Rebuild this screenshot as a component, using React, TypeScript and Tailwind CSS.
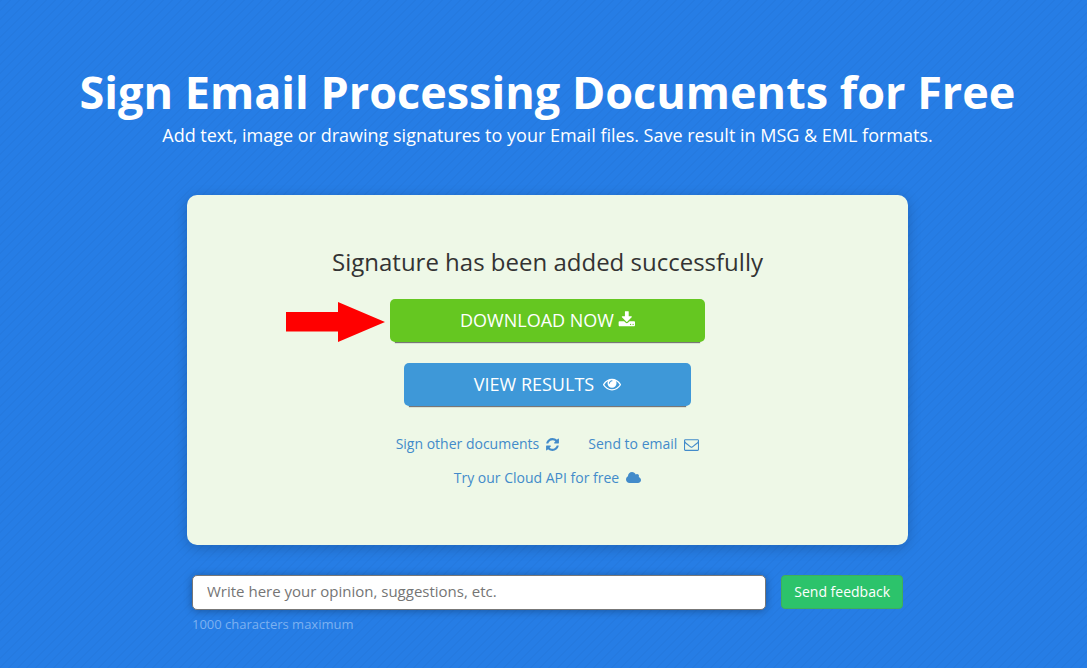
import React from "react";

type IconProps = { className: string; viewBox: string; d: string };

function Icon({ className, viewBox, d }: IconProps) {
  return (
    <svg className={className} viewBox={viewBox} fill="currentColor" aria-hidden="true">
      <path d={d} />
    </svg>
  );
}

const DOWNLOAD =
  "M1344 1344q0-26-19-45t-45-19-45 19-19 45 19 45 45 19 45-19 19-45zm256 0q0-26-19-45t-45-19-45 19-19 45 19 45 45 19 45-19 19-45zm128-224v320q0 40-28 68t-68 28h-1472q-40 0-68-28t-28-68v-320q0-40 28-68t68-28h465l135 136q58 56 136 56t136-56l136-136h464q40 0 68 28t28 68zm-325-569q17 41-14 70l-448 448q-18 19-45 19t-45-19l-448-448q-31-29-14-70 17-39 59-39h256v-448q0-26 19-45t45-19h256q26 0 45 19t19 45v448h256q42 0 59 39z";
const EYE =
  "M1664 960q-152-236-381-353 61 104 61 225 0 185-131.5 316.5t-316.5 131.5-316.5-131.5-131.5-316.5q0-121 61-225-229 117-381 353 133 205 333.5 326.5t434.5 121.5 434.5-121.5 333.5-326.5zm-720-384q0-20-14-34t-34-14q-125 0-214.5 89.5t-89.5 214.5q0 20 14 34t34 14 34-14 14-34q0-86 61-147t147-61q20 0 34-14t14-34zm848 384q0 34-20 69-140 230-376.5 368.5t-499.5 138.5-499.5-139-376.5-368q-20-35-20-69t20-69q140-229 376.5-368t499.5-139 499.5 139 376.5 368q20 35 20 69z";
const REFRESH =
  "M1639 1056q0 5-1 7-64 268-268 434.5t-478 166.5q-146 0-282.5-55t-243.5-157l-129 129q-19 19-45 19t-45-19-19-45v-448q0-26 19-45t45-19h448q26 0 45 19t19 45-19 45l-137 137q71 66 161 102t187 36q134 0 250-65t186-179q11-17 53-117 8-23 30-23h192q13 0 22.5 9.5t9.5 22.5zm25-800v448q0 26-19 45t-45 19h-448q-26 0-45-19t-19-45 19-45l138-138q-148-137-349-137-134 0-250 65t-186 179q-11 17-53 117-8 23-30 23h-199q-13 0-22.5-9.5t-9.5-22.5v-7q65-268 270-434.5t480-166.5q146 0 284 55.5t245 156.5l130-129q19-19 45-19t45 19 19 45z";
const ENVELOPE =
  "M1664 1504v-768q-32 36-69 66-268 206-426 338-51 43-83 67t-86.5 48.5-102.5 24.5h-2q-48 0-102.5-24.5t-86.5-48.5-83-67q-158-132-426-338-37-30-69-66v768q0 13 9.5 22.5t22.5 9.5h1472q13 0 22.5-9.5t9.5-22.5zm0-1051v-24.5l-.5-13-3-12.5-5.5-9-9-7.5-14-2.5h-1472q-13 0-22.5 9.5t-9.5 22.5q0 168 147 284 193 152 401 317 6 5 35 29.5t46 37.5 44.5 31.5 50.5 27.5 43 9h2q20 0 43-9t50.5-27.5 44.5-31.5 46-37.5 35-29.5q208-165 401-317 54-43 100.5-115.5t46.5-131.5zm128-37v1088q0 66-47 113t-113 47h-1472q-66 0-113-47t-47-113v-1088q0-66 47-113t113-47h1472q66 0 113 47t47 113z";
const CLOUD =
  "M1984 1152q0 159-112.5 271.5t-271.5 112.5h-1088q-185 0-316.5-131.5t-131.5-316.5q0-132 71-241.5t187-163.5q-2-28-2-43 0-212 150-362t362-150q158 0 286.5 88t187.5 230q70-62 166-62 106 0 181 75t75 181q0 75-41 138 129 30 213 134.5t84 239.5z";

export default function App() {
  return (
    <main className="min-h-screen bg-[#267de5] bg-[linear-gradient(135deg,rgba(0,0,0,0.025)_15%,transparent_15%,transparent_50%,rgba(0,0,0,0.025)_50%,rgba(0,0,0,0.025)_65%,transparent_65%)] bg-[length:9px_9px] pt-16 pb-8 pl-2 font-['Open_Sans','Noto_Sans',sans-serif] text-white">
      <header className="text-center">
        <h1 className="text-[45px] leading-[56px] font-bold">Sign Email Processing Documents for Free</h1>
        <p className="text-lg leading-[30px]">
          Add text, image or drawing signatures to your Email files. Save result in MSG &amp; EML formats.
        </p>
      </header>

      <div className="mx-auto mt-[45px] max-w-[721px]">
        <section className="flex flex-col items-center rounded-[10px] bg-[#eef8e7] px-6 pt-12 pb-[50px] shadow-[0_3px_14px_rgba(0,0,0,0.2)]">
          <h2 className="text-2xl leading-[38px] text-[#333333]">Signature has been added successfully</h2>
          <div className="relative mt-[18px]">
            <svg
              className="absolute top-[3px] right-full mr-[5px] h-10 w-[99px]"
              viewBox="0 0 99 40"
              fill="#ff0000"
              aria-hidden="true"
            >
              <path d="M0 10H52V0L99 20L52 40V29.5H0Z" />
            </svg>
            <button
              type="button"
              className="flex h-[43px] items-center rounded-[5px] bg-[#65c721] px-[70px] pb-0.5 text-lg shadow-[0_6px_1px_-5px_#777777]"
            >
              DOWNLOAD NOW
              <Icon className="ml-1 h-[18px] w-[17px]" viewBox="0 0 1728 1792" d={DOWNLOAD} />
            </button>
          </div>
          <button
            type="button"
            className="mt-[21px] flex h-[43px] items-center rounded-[5px] bg-[#3e98d8] px-[70px] pb-0.5 text-lg shadow-[0_6px_1px_-5px_#777777]"
          >
            VIEW RESULTS
            <Icon className="ml-[9px] size-[18px]" viewBox="0 0 1792 1792" d={EYE} />
          </button>
          <nav className="mt-[21px] flex flex-wrap justify-center gap-x-7 text-sm leading-[34px] text-[#428bca]">
            <a href="#sign" className="flex items-center">
              Sign other documents
              <Icon className="ml-1.5 size-[15px]" viewBox="0 0 1792 1792" d={REFRESH} />
            </a>
            <a href="#email" className="flex items-center">
              Send to email
              <Icon className="ml-[7px] size-[15px]" viewBox="0 0 1792 1792" d={ENVELOPE} />
            </a>
            <span className="flex w-full justify-center">
              <a href="#cloud" className="flex items-center">
                Try our Cloud API for free
                <Icon className="ml-[7px] h-3.5 w-[15px]" viewBox="64 0 1920 1792" d={CLOUD} />
              </a>
            </span>
          </nav>
        </section>

        <form className="mt-[30px] flex items-start gap-[15px] px-[5px]" onSubmit={(e) => e.preventDefault()}>
          <div className="flex-1">
            <input
              type="text"
              aria-label="Feedback"
              maxLength={1000}
              placeholder="Write here your opinion, suggestions, etc."
              className="block h-[35px] w-full rounded-[5px] border border-[#777777] bg-white px-3.5 pb-[3px] text-[15px] text-[#333333] shadow-[0_1px_8px_rgba(0,0,0,0.3)] placeholder:text-[#757575]"
            />
            <p className="mt-1 text-[13px] leading-5 text-[#7db1f0]">1000 characters maximum</p>
          </div>
          <button
            type="submit"
            className="h-[34px] rounded-[4px] border border-[#3fae5c] bg-[#2cc36b] px-3 text-sm"
          >
            Send feedback
          </button>
        </form>
      </div>
    </main>
  );
}
